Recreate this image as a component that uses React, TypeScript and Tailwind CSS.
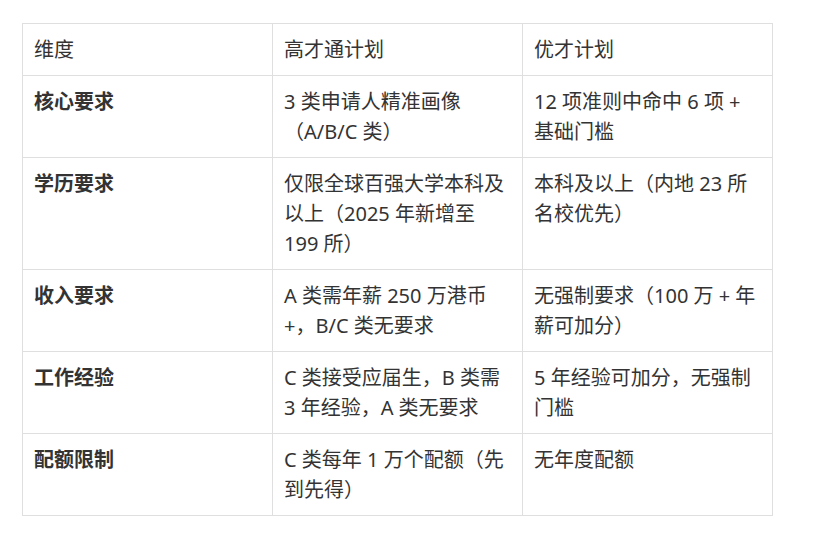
import React from "react"

const rows: [string, string, string][] = [
  ["核心要求", "3 类申请人精准画像（A/B/C 类）", "12 项准则中命中 6 项 + 基础门槛"],
  ["学历要求", "仅限全球百强大学本科及以上（2025 年新增至 199 所）", "本科及以上（内地 23 所名校优先）"],
  ["收入要求", "A 类需年薪 250 万港币 +，B/C 类无要求", "无强制要求（100 万 + 年薪可加分）"],
  ["工作经验", "C 类接受应届生，B 类需 3 年经验，A 类无要求", "5 年经验可加分，无强制门槛"],
  ["配额限制", "C 类每年 1 万个配额（先到先得）", "无年度配额"],
]

const cell = "border border-[#dfdfdf] px-[11px] pt-[11px] pb-[10px] align-top w-[250px]"

export default function App() {
  return (
    <div className="min-h-[548px] w-[816px] bg-white pl-[22px] pt-[23px] text-[20px] leading-[30px] text-[#333333] [font-family:'Noto_Sans','Noto_Sans_CJK_SC',sans-serif]">
      <table className="border-collapse table-fixed w-[751px]">
        <thead>
          <tr>
            <td className={cell}>维度</td>
            <td className={cell}>高才通计划</td>
            <td className={cell}>优才计划</td>
          </tr>
        </thead>
        <tbody>
          {rows.map(([a, b, c]) => (
            <tr key={a}>
              <td className={cell + " font-bold"}>{a}</td>
              <td className={cell}>{b}</td>
              <td className={cell}>{c}</td>
            </tr>
          ))}
        </tbody>
      </table>
    </div>
  )
}
